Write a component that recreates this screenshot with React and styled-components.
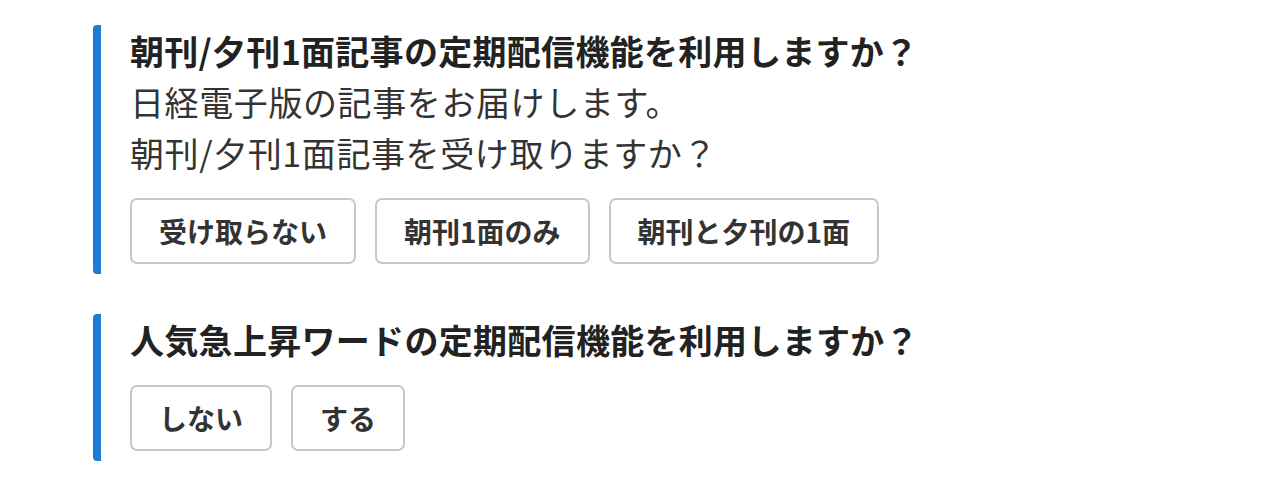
import React from "react";
import styled, { createGlobalStyle } from "styled-components";

const questions = [
  {
    title: "朝刊/夕刊1面記事の定期配信機能を利用しますか？",
    lines: ["日経電子版の記事をお届けします。", "朝刊/夕刊1面記事を受け取りますか？"],
    options: ["受け取らない", "朝刊1面のみ", "朝刊と夕刊の1面"],
  },
  {
    title: "人気急上昇ワードの定期配信機能を利用しますか？",
    lines: [],
    options: ["しない", "する"],
  },
];

export default function App() {
  return (
    <>
      <GlobalStyle />
      <Page>
        {questions.map((q) => (
          <Question key={q.title}>
            <Title>{q.title}</Title>
            {q.lines.map((line) => (
              <Text key={line}>{line}</Text>
            ))}
            <Options>
              {q.options.map((opt) => (
                <Option key={opt}>{opt}</Option>
              ))}
            </Options>
          </Question>
        ))}
      </Page>
    </>
  );
}

const GlobalStyle = createGlobalStyle`
  body {
    margin: 0;
    background: #fff;
    font-family: "Noto Sans CJK JP", "Noto Sans", sans-serif;
    color: #222;
  }
`;

const Page = styled.div`
  display: flex;
  flex-direction: column;
  gap: 40px;
  padding: 25px 0 0 93px;
`;

const Question = styled.section`
  display: flex;
  flex-direction: column;
  border-left: 8px solid #1f7bd6;
  border-radius: 4px;
  padding: 0 0 10px 29px;
`;

const Title = styled.h2`
  margin: 0;
  font-size: 34px;
  font-weight: 700;
  line-height: 51px;
  letter-spacing: 0.3px;
  color: #222;
`;

const Text = styled.p`
  margin: 0;
  font-size: 34px;
  font-weight: 400;
  line-height: 51px;
  letter-spacing: 0.6px;
  color: #333;
`;

const Options = styled.div`
  display: flex;
  gap: 19px;
  margin-top: 20px;
`;

const Option = styled.button`
  font-family: inherit;
  font-size: 28px;
  font-weight: 700;
  line-height: 42px;
  color: #333;
  background: #fff;
  border: 2px solid #c8c8c8;
  border-radius: 7px;
  padding: 10px 27px;
  height: 66px;
  cursor: pointer;
`;
